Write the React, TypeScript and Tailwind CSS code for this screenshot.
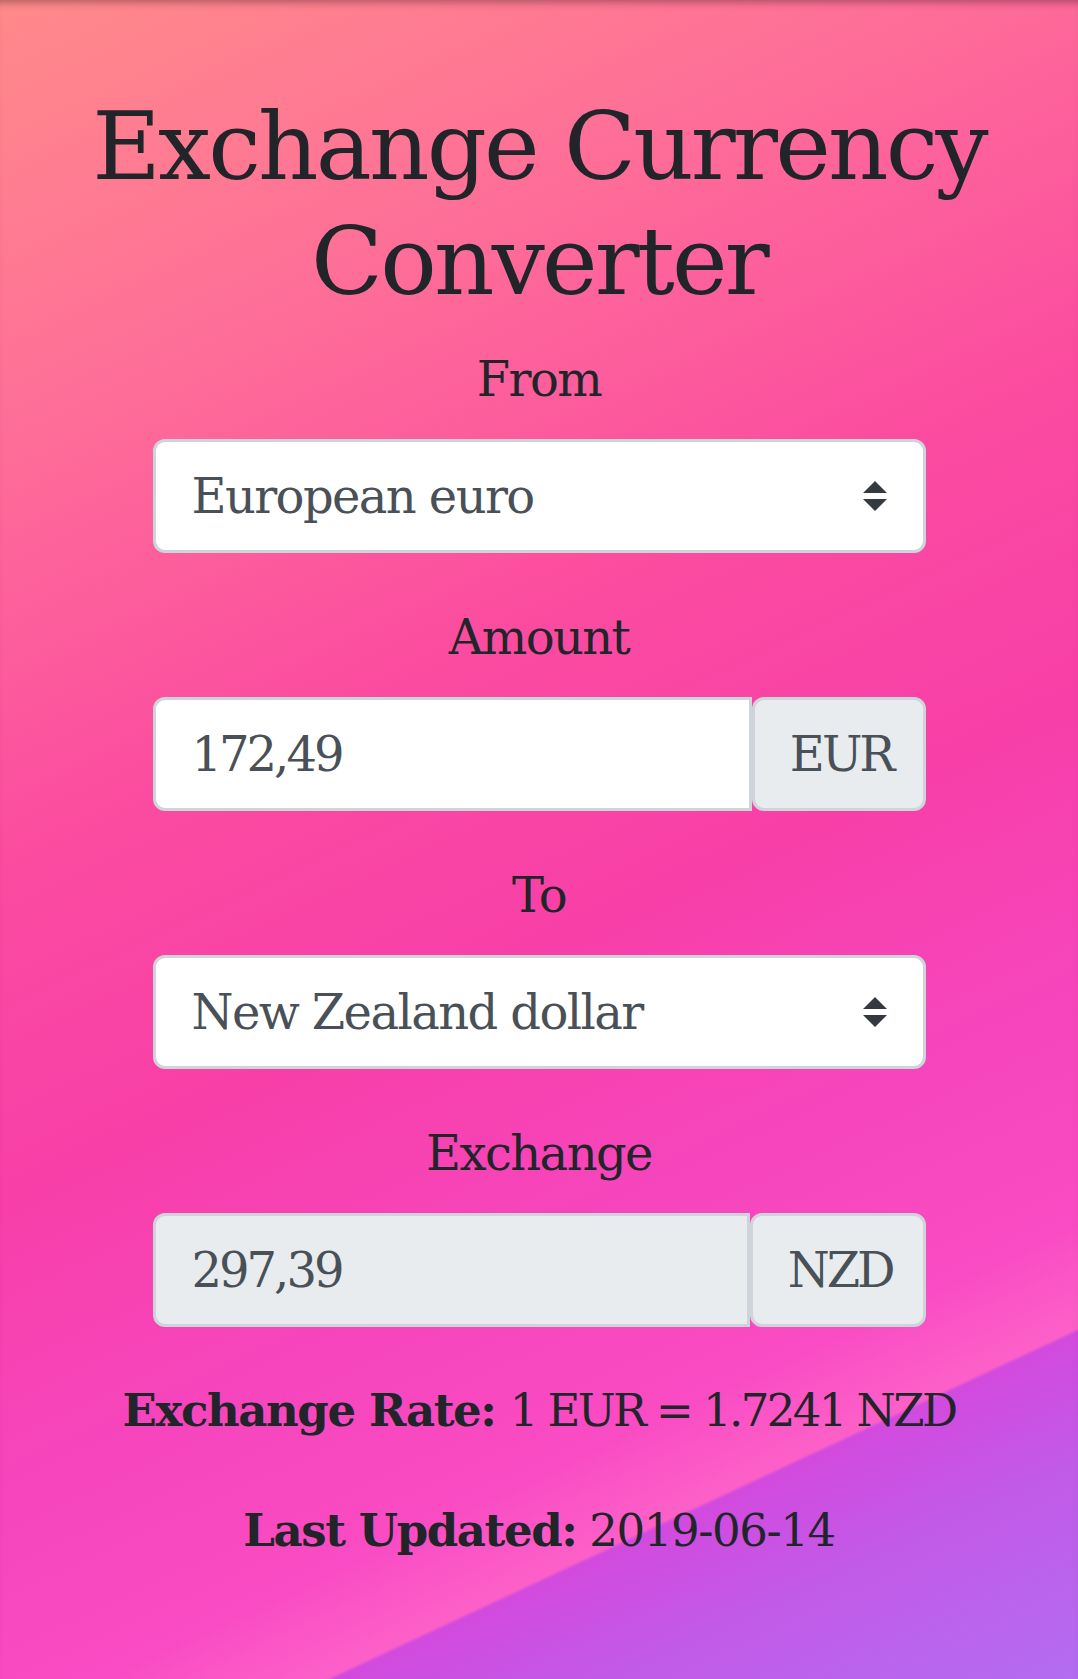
import React from "react";

function Arrows() {
  return (
    <svg width="24" height="30" viewBox="0 0 4 5" className="shrink-0">
      <path fill="#343a40" d="M2 0L0 2h4zm0 5L0 3h4z" />
    </svg>
  );
}

function Label({ children }: { children: React.ReactNode }) {
  return <div className="mb-[24px] text-[48px] leading-[72px] tracking-[-1.6px]">{children}</div>;
}

function Select({ value }: { value: string }) {
  return (
    <div className="flex h-[114px] items-center justify-between rounded-[12px] border-[3px] border-[#ced4da] bg-white px-[36px] text-[48px] text-[#495057]">
      <span className="tracking-[-1.6px]">{value}</span>
      <Arrows />
    </div>
  );
}

function Group({ value, unit, readOnly }: { value: string; unit: string; readOnly?: boolean }) {
  return (
    <div className="flex h-[114px] text-[48px] text-[#495057]">
      <div
        className={
          "flex flex-1 items-center rounded-l-[12px] border-[3px] border-[#ced4da] px-[36px] tracking-[-3px] " +
          (readOnly ? "bg-[#e9ecef]" : "bg-white")
        }
      >
        {value}
      </div>
      <div className="flex items-center rounded-[12px] border-[3px] border-[#ced4da] bg-[#e9ecef] pl-[35px] pr-[30px] tracking-[-3px]">
        {unit}
      </div>
    </div>
  );
}

export default function App() {
  return (
    <div className="min-h-screen bg-[image:linear-gradient(155deg,transparent_0%,transparent_79%,rgba(255,120,205,0.45)_83.9%,#d24ade_84.1%,#c25ae8_90%,#b36cf1_100%),linear-gradient(155deg,#ff8a8a_0%,#fe6e98_20%,#fb4ba0_40%,#f83fa8_55%,#f645bc_68%,#fa4cc4_80%,#fb50c4_100%)] font-['DejaVu_Serif',serif] text-[#212529] shadow-[inset_0_8px_8px_-6px_rgba(0,0,0,0.35)]">
      <div className="px-[45px] pt-[89px] text-center">
        <h1 className="mb-[24px] text-[94px] leading-[115px] tracking-[-2.8px]">
          Exchange Currency
          <br />
          Converter
        </h1>

        <div className="mx-auto w-[773px]">
          <div className="mb-[48px]">
            <Label>From</Label>
            <Select value="European euro" />
          </div>
          <div className="mb-[48px]">
            <Label>Amount</Label>
            <Group value="172,49" unit="EUR" />
          </div>
          <div className="mb-[48px]">
            <Label>To</Label>
            <Select value="New Zealand dollar" />
          </div>
          <div className="mb-[48px]">
            <Label>Exchange</Label>
            <Group value="297,39" unit="NZD" readOnly />
          </div>
        </div>

        <p className="mb-[48px] text-[45px] leading-[72px]">
          <b className="tracking-[-1.4px]">Exchange Rate:</b>{" "}
          <span className="tracking-[-2.6px]">1 EUR = 1.7241 NZD</span>
        </p>
        <p className="mb-[48px] text-[45px] leading-[72px] tracking-[-1.4px]">
          <b>Last Updated:</b> 2019-06-14
        </p>
      </div>
    </div>
  );
}
